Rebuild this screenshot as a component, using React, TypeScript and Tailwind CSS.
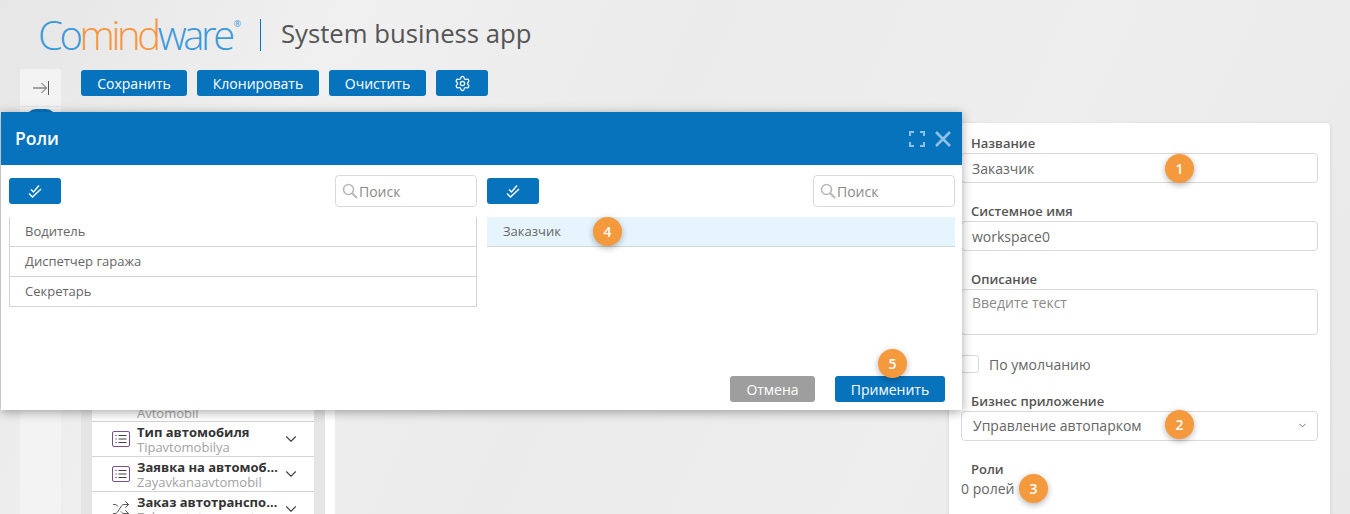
import { ChevronDown, Settings, Shuffle } from "lucide-react";
import type { ReactNode } from "react";

const font = "font-['Open_Sans',sans-serif]";

function Badge({ n, className }: { n: number; className: string }) {
  return (
    <div
      className={`absolute z-20 flex h-[29px] w-[29px] items-center justify-center rounded-full bg-[#f5993d] text-[14px] font-semibold text-white shadow-[0_2px_6px_rgba(0,0,0,0.3)] ${className}`}
    >
      {n}
    </div>
  );
}

function BlueButton({ children, className = "" }: { children: ReactNode; className?: string }) {
  return (
    <button className={`flex h-[26px] shrink-0 items-center justify-center rounded-[3px] bg-[#0773bd] text-[14px] text-white ${className}`}>
      {children}
    </button>
  );
}

function ListIcon() {
  return (
    <svg width="18" height="18" viewBox="0 0 18 18" fill="none" className="shrink-0">
      <rect x="0.5" y="1.5" width="17" height="15" rx="1.5" stroke="#7d4c8c" />
      <path d="M6.5 5.5h8M6.5 9h8M6.5 12.5h8M3.5 5.5h1.2M3.5 9h1.2M3.5 12.5h1.2" stroke="#3f3f46" strokeWidth="1.2" />
    </svg>
  );
}

function DoubleCheck() {
  return (
    <svg width="14" height="14" viewBox="0 0 14 14" fill="none" stroke="white" strokeWidth="1.4">
      <path d="M3 5.5l2.5 2.5L11 1.5M1 9.5l3.5 3.5L13 5" />
    </svg>
  );
}

function SearchIcon() {
  return (
    <svg width="16" height="16" viewBox="0 0 16 16" fill="none" stroke="#b8b8b8" strokeWidth="1.6" className="shrink-0">
      <circle cx="6.5" cy="6.5" r="5" />
      <path d="M10.2 10.2l4.8 4.8" strokeWidth="2" />
    </svg>
  );
}

function TreeRow({ title, sub, icon }: { title: string; sub: string; icon: ReactNode }) {
  return (
    <div className="flex h-[35px] items-center border-b border-[#d4d4d4] bg-white pl-5 pr-[14px]">
      <div className="w-[25px] shrink-0">{icon}</div>
      <div className="min-w-0 flex-1 pt-px leading-none">
        <div className="truncate text-[13px] leading-[16px] font-bold text-[#333]">{title}</div>
        <div className="text-[13px] leading-[15px] text-[#a3a3a3]">{sub}</div>
      </div>
      <ChevronDown size={18} strokeWidth={1.5} className="ml-1 shrink-0 text-[#444]" />
    </div>
  );
}

function Toolbar() {
  return (
    <div className="flex h-[32px] items-center justify-between">
      <BlueButton className="w-[52px]">
        <DoubleCheck />
      </BlueButton>
      <div className="flex h-[32px] w-[142px] items-center gap-[1px] rounded-[4px] border border-[#d9d9d9] pl-[6px] text-[14px] text-[#8a8a8a]">
        <SearchIcon />
        Поиск
      </div>
    </div>
  );
}

function RoleRow({ name }: { name: string }) {
  return (
    <div className="flex h-[30px] items-center border-b border-[#d4d4d4] pl-[15px] pt-px text-[13px] text-[#666]">{name}</div>
  );
}

function Field({ label, children }: { label: string; children: ReactNode }) {
  return (
    <div>
      <div className="h-5 pl-[22px] text-[13px] leading-5 font-semibold text-[#555]">{label}</div>
      {children}
    </div>
  );
}

function TextBox({ value }: { value: string }) {
  return (
    <div className="ml-[12px] flex h-[30px] items-center rounded-[4px] border border-[#d9d9d9] bg-white pl-[10px] text-[14px] text-[#666]">
      {value}
    </div>
  );
}

export default function App() {
  return (
    <div
      className={`relative h-[514px] w-[1350px] overflow-hidden bg-[#ececec] bg-[linear-gradient(115deg,#e6e6e6_0%,#f0f0f0_22%,#ebebeb_45%,#eeeeee_70%,#e9e9e9_100%)] ${font}`}
    >
      {/* logo row */}
      <header className="flex h-[69px] items-start pl-[38px] pt-[19px]">
        <div className="flex h-[32px] w-[222px] items-start">
          <span className="text-[40px] leading-[32px] font-light tracking-[-3.4px] text-[#3b9ad9]">
            Co<span className="text-[#f7963e]">mind</span>ware
          </span>
          <span className="ml-[2px] text-[9px] leading-[9px] text-[#3b9ad9]">®</span>
        </div>
        <div className="h-[32px] w-px bg-[#0773bd]" />
        <div className="ml-5 text-[25.7px] leading-[30px] text-[#555]">System business app</div>
      </header>

      <div className="flex">
        {/* collapsed nav */}
        <aside className="ml-5 h-[445px] w-[41px] rounded-t-[3px] bg-[#f3f3f3]">
          <div className="flex h-[38px] items-center justify-center border-b border-[#e4e4e4]">
            <svg width="16" height="14" viewBox="0 0 16 14" fill="none" stroke="#555" strokeWidth="1">
              <path d="M0 7h13M8.5 2l5 5-5 5M15.5 0v14" />
            </svg>
          </div>
          <div className="mx-auto mt-[2px] h-[10px] w-[30px] rounded-t-full bg-[#0773bd]" />
        </aside>

        {/* designer column */}
        <main className="ml-5 w-[254px]">
          <div className="flex gap-[10px] pt-px">
            <BlueButton className="w-[106px]">Сохранить</BlueButton>
            <BlueButton className="w-[122px]">Клонировать</BlueButton>
            <BlueButton className="w-[97px]">Очистить</BlueButton>
            <BlueButton className="w-[52px]">
              <Settings size={17} strokeWidth={1.7} />
            </BlueButton>
          </div>
          <div className="mt-[26px] h-[400px] bg-white pr-[10px]">
            <div className="h-full w-full bg-[#e5e5e5] px-[11px] pt-[265px]">
              <div className="flex h-[35px] items-end border-b border-[#d4d4d4] bg-white pl-[45px] text-[13px] leading-[15px] text-[#a3a3a3]">
                Avtomobil
              </div>
              <TreeRow title="Тип автомобиля" sub="Tipavtomobilya" icon={<ListIcon />} />
              <TreeRow title="Заявка на автомобиль" sub="Zayavkanaavtomobil" icon={<ListIcon />} />
              <TreeRow
                title="Заказ автотранспорта"
                sub="Zakazavtotransporta"
                icon={<Shuffle size={18} strokeWidth={1.2} className="text-[#444]" />}
              />
            </div>
          </div>
        </main>

        {/* properties panel */}
        <section className="relative ml-auto mr-5 mt-[54px] h-[400px] w-[381px] rounded-[4px] bg-white pr-[12px] pt-[10px] shadow-[0_1px_4px_rgba(0,0,0,0.12)]">
          <Field label="Название">
            <TextBox value="Заказчик" />
          </Field>
          <div className="mt-[18px]">
            <Field label="Системное имя">
              <TextBox value="workspace0" />
            </Field>
          </div>
          <div className="mt-[18px]">
            <Field label="Описание">
              <div className="ml-[12px] h-[46px] rounded-[4px] border border-[#d9d9d9] pl-[10px] pt-[3px] text-[14px] leading-5 text-[#8a8a8a]">
                Введите текст
              </div>
            </Field>
          </div>
          <div className="ml-[12px] mt-[20px] flex h-[18px] items-center gap-[10px] text-[14px] text-[#666]">
            <div className="h-[18px] w-[18px] rounded-[3px] border border-[#d9d9d9]" />
            По умолчанию
          </div>
          <div className="mt-[18px]">
            <Field label="Бизнес приложение">
              <div className="ml-[12px] flex h-[30px] items-center justify-between rounded-[4px] border border-[#d9d9d9] pb-[2px] pl-[11px] pr-[9px] text-[14px] text-[#666]">
                Управление автопарком
                <ChevronDown size={11} strokeWidth={2} className="text-[#666]" />
              </div>
            </Field>
          </div>
          <div className="mt-[18px]">
            <Field label="Роли">
              <div className="pl-[12px] text-[14px] leading-5 text-[#666]">0 ролей</div>
            </Field>
          </div>
        </section>
      </div>

      {/* roles dialog */}
      <div className="absolute left-px top-[112px] z-10 flex h-[298px] w-[961px] flex-col bg-white shadow-[0_2px_10px_rgba(0,0,0,0.35)]">
        <div className="flex h-[53px] shrink-0 items-center justify-between bg-[#0773bd] pl-[14px] pr-[11px]">
          <span className="text-[17.5px] font-semibold text-white">Роли</span>
          <div className="flex items-center gap-[9px] text-[#8ec1e6]">
            <svg width="18" height="18" viewBox="0 0 18 18" fill="none" stroke="currentColor" strokeWidth="2">
              <path d="M2 6V2h4M12 2h4v4M16 12v4h-4M6 16H2v-4" />
            </svg>
            <svg width="16" height="16" viewBox="0 0 16 16" fill="none" stroke="currentColor" strokeWidth="2.6">
              <path d="M1 1l14 14M15 1L1 15" />
            </svg>
          </div>
        </div>
        <div className="flex gap-[10px] pl-2 pr-[7px] pt-[10px]">
          <div className="w-[468px]">
            <Toolbar />
            <div className="mt-[10px] border-x border-[#d4d4d4]">
              <RoleRow name="Водитель" />
              <RoleRow name="Диспетчер гаража" />
              <RoleRow name="Секретарь" />
            </div>
          </div>
          <div className="w-[468px]">
            <Toolbar />
            <div className="mt-[10px] flex h-[30px] items-center border-b border-[#d4d4d4] bg-[#e6f4fd] pl-[16px] pt-px text-[13px] text-[#666]">
              Заказчик
            </div>
          </div>
        </div>
        <div className="mt-auto flex justify-end gap-5 pb-2 pr-[17px]">
          <BlueButton className="w-[85px] !bg-[#9e9e9e]">Отмена</BlueButton>
          <BlueButton className="w-[110px]">Применить</BlueButton>
        </div>
      </div>

      <Badge n={1} className="left-[1165px] top-[154px]" />
      <Badge n={2} className="left-[1165px] top-[410px]" />
      <Badge n={3} className="left-[1019px] top-[474px]" />
      <Badge n={4} className="left-[593px] top-[217px]" />
      <Badge n={5} className="left-[878px] top-[349px]" />
    </div>
  );
}
